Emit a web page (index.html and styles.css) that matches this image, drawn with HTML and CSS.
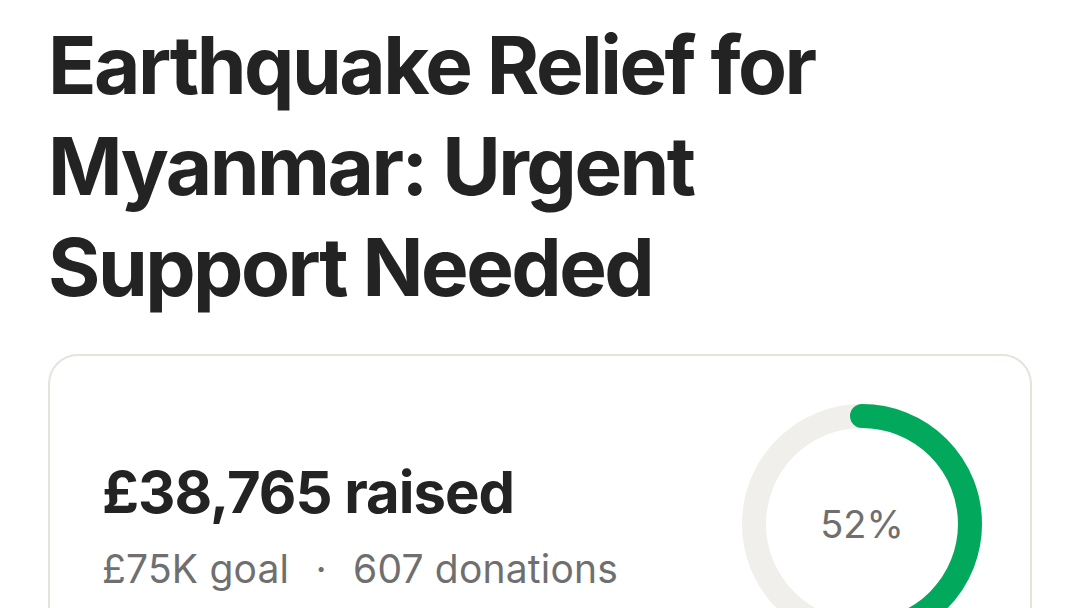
FILE: index.html
```html
<!DOCTYPE html>
<html lang="en">
<head>
  <meta charset="UTF-8">
  <title>Earthquake Relief for Myanmar</title>
  <link rel="stylesheet" href="styles.css">
</head>
<body>
  <div class="page">
    <h1 class="title">Earthquake Relief for Myanmar: Urgent Support Needed</h1>

    <div class="progress-card">
      <div class="amounts">
        <p class="raised">£38,765 raised</p>
        <p class="meta">£75K goal <span class="dot">·</span> 607 donations</p>
      </div>
      <div class="donut">
        <svg width="240" height="240" viewBox="0 0 240 240">
          <circle cx="120" cy="120" r="108" fill="none" stroke="#f0efeb" stroke-width="24"></circle>
          <circle cx="120" cy="120" r="108" fill="none" stroke="#02a95c" stroke-width="24"
                  stroke-linecap="round" stroke-dasharray="352.9 678.6"
                  transform="rotate(-90 120 120)"></circle>
        </svg>
        <span class="percent">52%</span>
      </div>
    </div>
  </div>
</body>
</html>
```

FILE: styles.css
```css
body {
  margin: 0;
  background-color: #fff;
  font-family: Inter, "Noto Sans", sans-serif;
  color: #232323;
}

.page {
  padding: 14px 48px 0 48px;
}

.title {
  font-size: 80px;
  font-weight: 700;
  line-height: 101px;
  letter-spacing: -2.5px;
  margin: 0 0 37px 0;
  max-width: 800px;
}

.progress-card {
  display: flex;
  justify-content: space-between;
  align-items: flex-start;
  border: 2px solid #e5e3dc;
  border-radius: 30px;
  padding: 48px 48px 48px 52px;
}

.amounts {
  margin-top: 56px;
}

.amounts p {
  margin: 0;
}

.raised {
  font-size: 58px;
  font-weight: 700;
  letter-spacing: -1px;
  line-height: 64px;
}

.meta {
  font-size: 39px;
  color: #6f6f6f;
  line-height: 48px;
  letter-spacing: 0.2px;
  margin-top: 21px !important;
}

.dot {
  margin: 0 15px;
}

.donut {
  position: relative;
  width: 240px;
  height: 240px;
}

.donut svg {
  display: block;
}

.percent {
  position: absolute;
  inset: 0;
  display: flex;
  align-items: center;
  justify-content: center;
  font-size: 38px;
  color: #6f6f6f;
}
```
